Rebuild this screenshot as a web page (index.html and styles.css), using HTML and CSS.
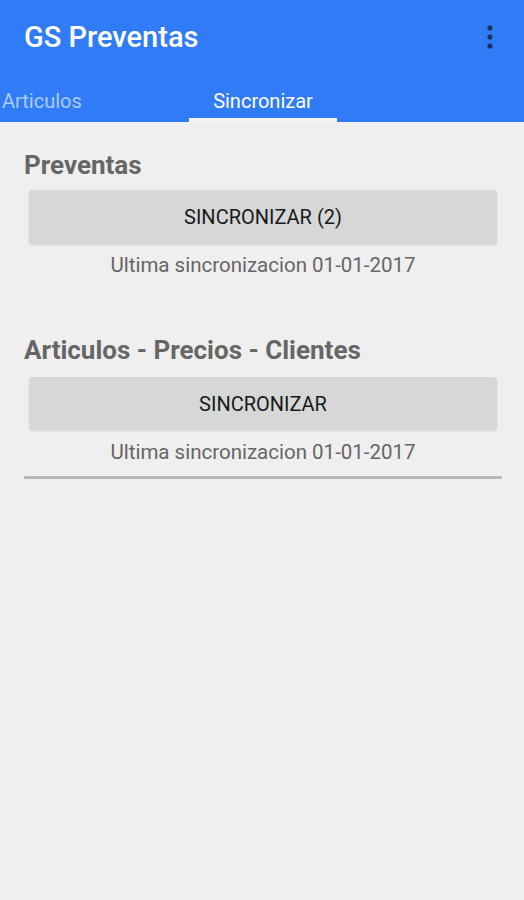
FILE: index.html
```html
<!DOCTYPE html>
<html lang="es">
<head>
<meta charset="utf-8">
<title>GS Preventas</title>
<link rel="stylesheet" href="styles.css">
</head>
<body>
<header class="appbar">
  <div class="toolbar">
    <h1 class="title">GS Preventas</h1>
    <svg class="kebab" width="10" height="30" viewBox="0 0 10 30" aria-hidden="true">
      <circle cx="5" cy="6" r="2.6"/>
      <circle cx="5" cy="15" r="2.6"/>
      <circle cx="5" cy="24" r="2.6"/>
    </svg>
  </div>
  <nav class="tabs">
    <div class="tab tab-first">Articulos</div>
    <div class="tab tab-active">Sincronizar</div>
  </nav>
</header>
<main class="content">
  <section class="section">
    <h2 class="heading">Preventas</h2>
    <button class="btn">SINCRONIZAR (2)</button>
    <p class="last">Ultima sincronizacion 01-01-2017</p>
  </section>
  <section class="section second">
    <h2 class="heading">Articulos - Precios - Clientes</h2>
    <button class="btn btn2">SINCRONIZAR</button>
    <p class="last last2">Ultima sincronizacion 01-01-2017</p>
    <div class="progress"></div>
  </section>
</main>
</body>
</html>
```
FILE: styles.css
```css
* { box-sizing: border-box; }
html, body {
  margin: 0;
  padding: 0;
  background: #efefef;
  font-family: Roboto, "Liberation Sans", Arial, sans-serif;
}
.appbar {
  background: #2f7cf6;
  height: 122px;
}
.toolbar {
  height: 74px;
  display: flex;
  align-items: center;
  justify-content: space-between;
  padding: 0 29px 0 24px;
}
.title {
  margin: 0;
  font-size: 29px;
  line-height: 32px;
  font-weight: 500;
  color: #ffffff;
}
.kebab {
  fill: #17305f;
}
.tabs {
  display: flex;
  height: 48px;
}
.tab {
  height: 48px;
  padding-top: 15px;
  font-size: 20px;
  line-height: 24px;
  color: rgba(255, 255, 255, 0.62);
  border-bottom: 4px solid transparent;
}
.tab-first {
  width: 189px;
  padding-left: 2px;
}
.tab-active {
  width: 148px;
  text-align: center;
  color: #ffffff;
  border-bottom-color: #f4f4f4;
}
.content {
  padding: 28px 22px 0 24px;
}
.section { display: flex; flex-direction: column; }
.second { margin-top: 58px; }
.heading {
  margin: 0;
  font-size: 26px;
  line-height: 30px;
  font-weight: 700;
  color: #666666;
}
.btn {
  margin: 10px 5px 0 5px;
  height: 54px;
  border: none;
  border-radius: 3px;
  background: #d6d7d7;
  box-shadow: 0 1px 2px rgba(0, 0, 0, 0.12);
  font-family: Roboto, "Liberation Sans", Arial, sans-serif;
  font-size: 20px;
  font-weight: 400;
  color: #1a1a1a;
  padding: 0;
}
.btn2 {
  margin-top: 12px;
  height: 53px;
}
.last {
  margin: 9px 0 0 0;
  text-align: center;
  font-size: 20.5px;
  line-height: 24px;
  color: #666666;
}
.last2 { margin-top: 10px; }
.progress {
  margin-top: 12px;
  height: 3px;
  background: #b4b9b9;
  border-radius: 1px;
  box-shadow: 0 1px 1px rgba(0, 0, 0, 0.08);
}
```
